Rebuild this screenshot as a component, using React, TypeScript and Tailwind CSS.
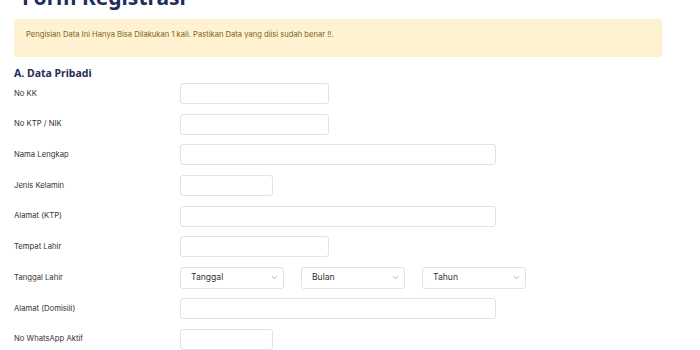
import React from "react";

const Chevron = () => (
  <svg width="7" height="5" viewBox="0 0 7 5" className="shrink-0">
    <path d="M1 1.2 L3.5 3.6 L6 1.2" fill="none" stroke="#9aa0a6" strokeWidth="0.8" />
  </svg>
);

function Input({ w }: { w: string }) {
  return <div className={`${w} h-[21px] rounded-[3px] border border-[#dfe2e6] bg-white`} />;
}

function Select({ label }: { label: string }) {
  return (
    <div className="w-[104px] h-[22px] rounded-[3px] border border-[#dfe2e6] bg-white flex items-center justify-between pl-[10px] pr-[5px]">
      <span className="text-[8.6px] text-[#333]">{label}</span>
      <Chevron />
    </div>
  );
}

const rows: { label: string; field: React.ReactNode }[] = [
  { label: "No KK", field: <Input w="w-[149px]" /> },
  { label: "No KTP / NIK", field: <Input w="w-[149px]" /> },
  { label: "Nama Lengkap", field: <Input w="w-[316px]" /> },
  { label: "Jenis Kelamin", field: <Input w="w-[93px]" /> },
  { label: "Alamat (KTP)", field: <Input w="w-[316px]" /> },
  { label: "Tempat Lahir", field: <Input w="w-[149px]" /> },
  {
    label: "Tanggal Lahir",
    field: (
      <div className="flex gap-[17px]">
        <Select label="Tanggal" />
        <Select label="Bulan" />
        <Select label="Tahun" />
      </div>
    ),
  },
  { label: "Alamat (Domisili)", field: <Input w="w-[316px]" /> },
  { label: "No WhatsApp Aktif", field: <Input w="w-[93px]" /> },
];

export default function App() {
  return (
    <div
      className="w-[700px] h-[350px] overflow-hidden bg-white"
      style={{ fontFamily: "Inter, Roboto, 'Noto Sans', sans-serif" }}
    >
      <div className="pl-[22px] h-[19px] flex items-end">
        <h1
          className="text-[21px] leading-none font-bold text-[#1f2d5c] mb-[11px]"
          style={{ fontFamily: "'Noto Sans', sans-serif" }}
        >
          Form Registrasi
        </h1>
      </div>
      <div className="mx-[14px] w-[648px] h-[38px] rounded-[3px] bg-[#fef2d1] border border-[#fcefcb] pl-[11px] pt-[8px]">
        <p className="text-[7.6px] leading-[13px] text-[#7d6323]">
          Pengisian Data Ini Hanya Bisa Dilakukan 1 kali. Pastikan Data yang diisi sudah benar !!.
        </p>
      </div>
      <h2
        className="ml-[14px] mt-[9px] text-[10.5px] leading-[14px] font-bold text-[#1f2d5c]"
        style={{ fontFamily: "'Noto Sans', sans-serif" }}
      >
        A. Data Pribadi
      </h2>
      <div className="mt-[3px] flex flex-col gap-[9.7px]">
        {rows.map((r) => (
          <div key={r.label} className="flex items-center h-[21px]">
            <div className="w-[180px] pl-[14px] text-[7.7px] text-[#333]">{r.label}</div>
            {r.field}
          </div>
        ))}
      </div>
    </div>
  );
}
